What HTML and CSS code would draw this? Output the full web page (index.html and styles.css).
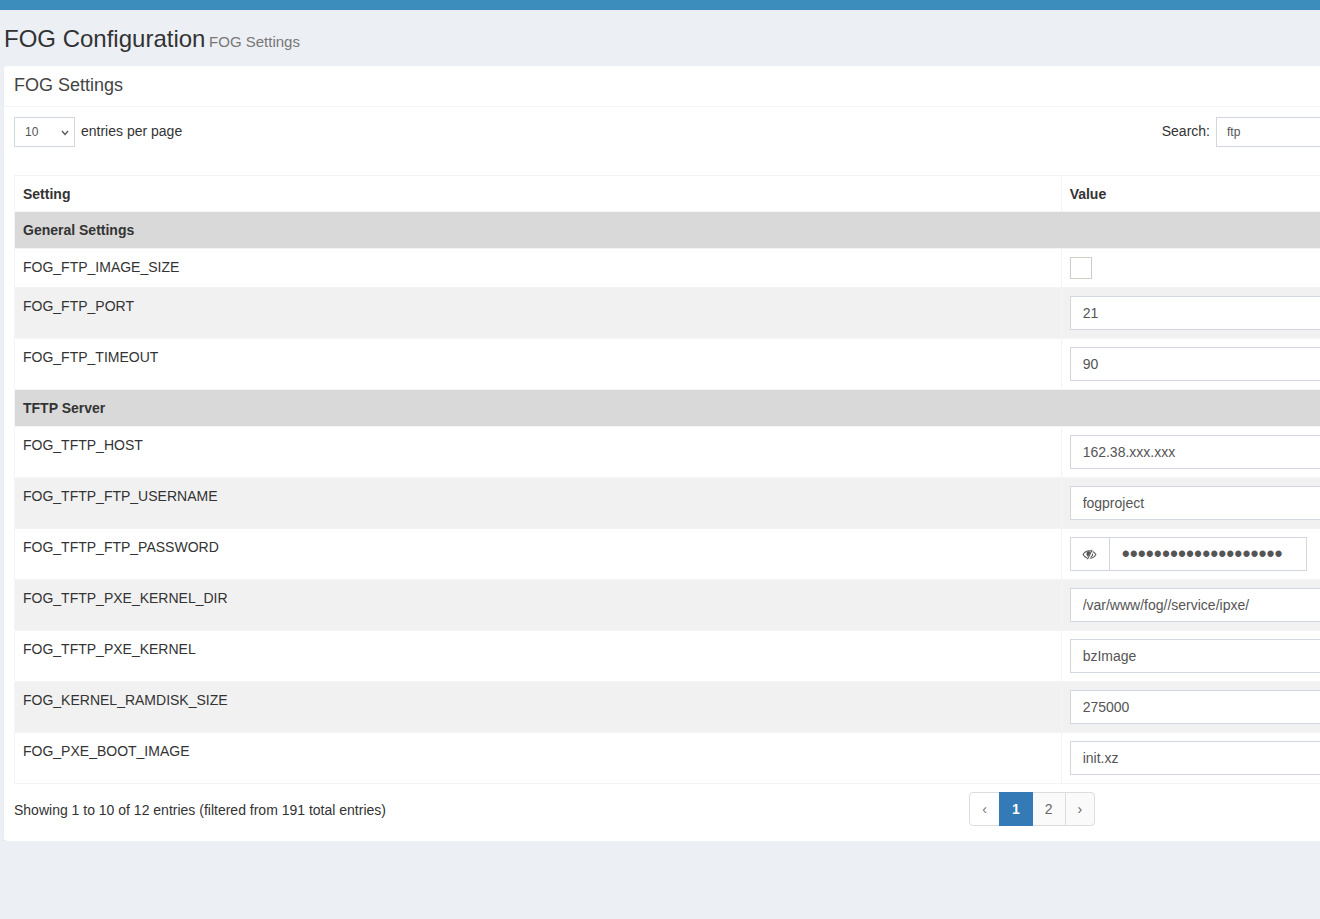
FILE: index.html
```html
<!DOCTYPE html>
<html lang="en">
<head>
<meta charset="utf-8">
<title>FOG Configuration</title>
<link rel="stylesheet" href="styles.css">
</head>
<body>
<div class="topbar"></div>
<header class="content-header">
  <h1>FOG Configuration <small>FOG Settings</small></h1>
</header>
<main class="box">
  <div class="box-header"><h2>FOG Settings</h2></div>
  <div class="box-body">
    <div class="toolbar">
      <div class="length">
        <span class="select-wrap">
          <select id="length" class="form-control small"><option>10</option><option>25</option><option>50</option></select>
          <svg class="chevron" width="8" height="6" viewBox="0 0 8 6" fill="none" stroke="#555" stroke-width="1.3"><path d="M1 1l3 3.4L7 1"/></svg>
        </span>
        <label for="length">entries per page</label>
      </div>
      <div class="search">
        <label for="search">Search:</label>
        <input id="search" class="form-control small" type="text" value="ftp">
      </div>
    </div>
    <table class="settings">
      <thead>
        <tr><th class="name">Setting</th><th>Value</th></tr>
      </thead>
      <tbody>
        <tr class="group"><th colspan="2">General Settings</th></tr>
        <tr><td><label for="s1">FOG_FTP_IMAGE_SIZE</label></td><td><input id="s1" class="check" type="checkbox"></td></tr>
        <tr class="odd"><td><label for="s2">FOG_FTP_PORT</label></td><td><input id="s2" class="form-control" type="text" value="21"></td></tr>
        <tr><td><label for="s3">FOG_FTP_TIMEOUT</label></td><td><input id="s3" class="form-control" type="text" value="90"></td></tr>
        <tr class="group"><th colspan="2">TFTP Server</th></tr>
        <tr><td><label for="s4">FOG_TFTP_HOST</label></td><td><input id="s4" class="form-control" type="text" value="162.38.xxx.xxx"></td></tr>
        <tr class="odd"><td><label for="s5">FOG_TFTP_FTP_USERNAME</label></td><td><input id="s5" class="form-control" type="text" value="fogproject"></td></tr>
        <tr><td><label for="s6">FOG_TFTP_FTP_PASSWORD</label></td><td>
          <div class="input-group">
            <button class="addon" type="button" aria-label="Show password">
              <svg width="15" height="11" viewBox="0 0 16 12" fill="none" stroke="#555" stroke-width="1.1"><path d="M5.6 10.1C3.6 9.400 2 7.900 1 6c1.500-2.600 4-4.100 7-4.100.6 0 1.100.1 1.600.2M11.600 2.700C13 3.500 14.200 4.600 15 6c-1.500 2.600-4 4.200-6.600 4.200"/><path d="M5.200 3.200C4.200 5 4.600 7.300 6.400 8.500L9.300 3.200C8 2.300 6 2.300 5.200 3.200z" fill="#555" stroke="none"/><path d="M11 .8L5.800 11.200M11.300 5c.3 1.500-.4 2.900-1.900 3.600"/></svg>
            </button>
            <input id="s6" class="form-control password" type="password" value="fogprojectpassword12">
          </div>
        </td></tr>
        <tr class="odd"><td><label for="s7">FOG_TFTP_PXE_KERNEL_DIR</label></td><td><input id="s7" class="form-control" type="text" value="/var/www/fog//service/ipxe/"></td></tr>
        <tr><td><label for="s8">FOG_TFTP_PXE_KERNEL</label></td><td><input id="s8" class="form-control" type="text" value="bzImage"></td></tr>
        <tr class="odd"><td><label for="s9">FOG_KERNEL_RAMDISK_SIZE</label></td><td><input id="s9" class="form-control" type="text" value="275000"></td></tr>
        <tr><td><label for="s10">FOG_PXE_BOOT_IMAGE</label></td><td><input id="s10" class="form-control" type="text" value="init.xz"></td></tr>
      </tbody>
    </table>
    <div class="footer">
      <div class="info">Showing 1 to 10 of 12 entries (filtered from 191 total entries)</div>
      <nav class="pagination" aria-label="Pages">
        <button class="page disabled" type="button">‹</button>
        <button class="page active" type="button">1</button>
        <button class="page" type="button">2</button>
        <button class="page" type="button">›</button>
      </nav>
    </div>
  </div>
</main>
</body>
</html>
```
FILE: styles.css
```css
* { box-sizing: border-box; }
body {
  margin: 0;
  overflow-x: hidden;
  background: #ecf0f5;
  color: #333;
  font: 14px/20px "Liberation Sans", Arial, sans-serif;
}
.topbar { height: 10px; background: #3c8dbc; }
.content-header { padding: 16px 4px 11px; }
h1 { margin: 0; font-size: 24px; line-height: 26px; font-weight: 400; }
h1 small { margin-left: -3px; font-size: 15px; color: #777; }
h2 { margin: 0; font-size: 18px; line-height: 20px; font-weight: 400; color: #444; }

/* the panel runs past the right edge of the window */
.box {
  margin: 0 -40px 0 4px;
  background: #fff;
  border-radius: 3px;
  box-shadow: 0 1px 1px rgba(0, 0, 0, 0.1);
}
.box-header { padding: 9px 10px 11px; border-bottom: 1px solid #f4f4f4; }
.box-body { padding: 10px 10px 15px; }

.toolbar { display: flex; justify-content: space-between; margin-bottom: 28px; }
.length, .search { display: flex; align-items: center; gap: 6px; }
.length label, .search label { margin-bottom: 2px; }
.select-wrap { position: relative; display: flex; }
.chevron { position: absolute; right: 6px; top: 13px; pointer-events: none; }

.form-control {
  display: block;
  width: 100%;
  height: 34px;
  padding: 6px 12px;
  border: 1px solid #d2d6de;
  border-radius: 0;
  background: #fff;
  color: #555;
  font: 14px/20px "Liberation Sans", Arial, sans-serif;
  appearance: none;
}
.form-control.small { height: 30px; padding: 5px 10px; font-size: 12px; line-height: 18px; }
select.small { width: 61px; }
.search .small { width: 134px; }

.settings { width: 100%; table-layout: fixed; border-collapse: collapse; }
.settings th, .settings td {
  padding: 8px;
  border: 1px solid #f4f4f4;
  text-align: left;
  vertical-align: top;
}
.settings thead th { padding-bottom: 7px; }
.name { width: 78.4%; }
.odd { background: #f1f1f1; }
.group { background: #d9d9d9; }
.check {
  display: block;
  width: 22px;
  height: 22px;
  margin: 0;
  border: 1px solid #d0cbc7;
  background: #fff;
  appearance: none;
}
.input-group { display: flex; width: 237px; }
.addon {
  display: flex;
  align-items: center;
  justify-content: center;
  width: 39px;
  padding: 0;
  border: 1px solid #d2d6de;
  border-right: 0;
  background: #fff;
}
.input-group .form-control { flex: 1; min-width: 0; }
.form-control.password { font-size: 23px; }

.footer { display: flex; padding-top: 8px; }
.info { width: 71.5%; padding-top: 8px; }
.pagination { display: flex; }
.page {
  height: 34px;
  margin-left: -1px;
  padding: 6px 12px;
  border: 1px solid #ddd;
  background: #fafafa;
  color: #666;
  font: 14px/20px "Liberation Sans", Arial, sans-serif;
}
.page:first-child { margin-left: 0; border-radius: 4px 0 0 4px; }
.page:last-child { border-radius: 0 4px 4px 0; }
.page.disabled { background: #fff; color: #777; }
.page.active { position: relative; background: #337ab7; border-color: #337ab7; color: #fff; font-weight: 700; }
```
